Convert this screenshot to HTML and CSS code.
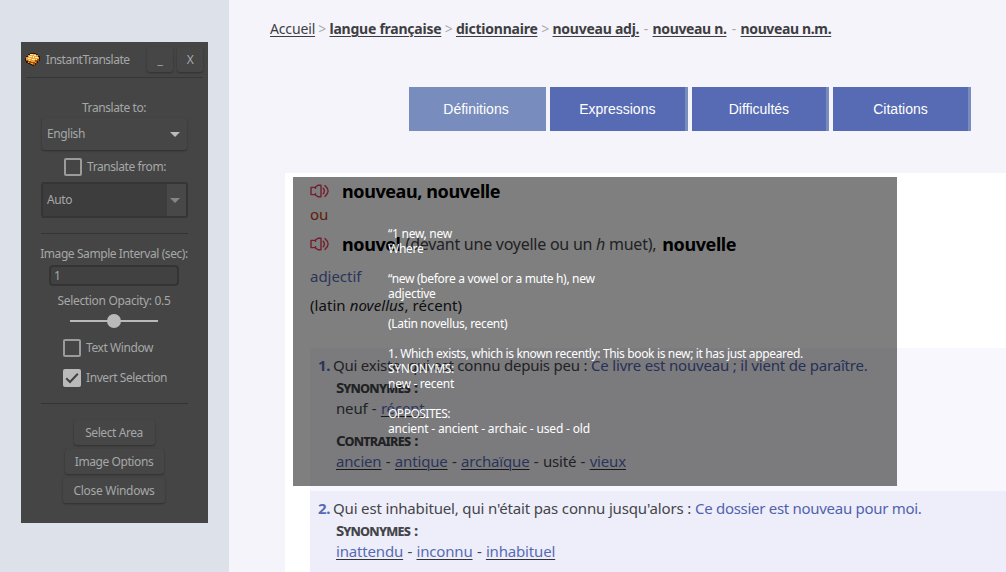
FILE: index.html
```html
<!DOCTYPE html>
<html lang="fr">
<head>
<meta charset="utf-8">
<title>nouveau, nouvelle</title>
<link rel="stylesheet" href="styles.css">
</head>
<body>
<svg width="0" height="0" class="defs">
  <symbol id="speaker" viewBox="0 0 20 14">
    <g fill="none" stroke="currentColor" stroke-width="1.4" stroke-linejoin="round">
      <path d="M5 3.4H1v7.2h4M5 3.4 8 1.2h3v11.6H8L5 10.6M5.5 3v2M5.5 9v2"/>
      <path d="M13.2 4.2q2.4 2.8 0 5.6M15 1.6q6.2 5.4 0 10.8" stroke-linecap="round"/>
    </g>
  </symbol>
</svg>
<div class="screen">
  <aside class="desk">
    <section class="panel">
      <header class="titlebar">
        <svg class="logo" width="16" height="16" viewBox="0 0 16 16" shape-rendering="crispEdges">
          <path fill="#2a1704" d="M5 1h6v1h2v2h2v5h-2v2h-2v2H9v1H7v-1H5v-1H3v-1H1V9H0V6h1V4h2V2h2z"/>
          <path fill="#a65208" d="M1 6h13v3h-2v2h-2v2H7v-1H5v-1H3V9H1z"/>
          <path fill="#eda03a" d="M5 2h6v1h2v2h1v2h-2v1h-2v2H6V9H3V8H1V5h2V3h2z"/>
          <path fill="#fff0b8" d="M5 2h3v1H5zM9 3h2v1H9zM4 4h3v1H4zM8 4h1v2H8zM10 5h3v1h-3zM3 6h3v1H3zM7 7h3v1H7zM11 7h1v1h-1zM4 8h1v1H4z"/>
          <path fill="#f6a62e" d="M3 10h1v1H3zM6 11h2v1H6zM10 10h1v1h-1z"/>
        </svg>
        <span class="app-name">InstantTranslate</span>
        <button class="btn win">_</button>
        <button class="btn win x">X</button>
      </header>
      <label class="row to">Translate to:</label>
      <div class="combo raised"><span>English</span><i class="arrow"></i></div>
      <div class="row check from"><i class="box"></i><span>Translate from:</span></div>
      <div class="combo sunken"><span>Auto</span><b class="drop"><i class="arrow"></i></b></div>
      <hr class="rule">
      <label class="row interval">Image Sample Interval (sec):</label>
      <div class="field">1</div>
      <label class="row opacity">Selection Opacity: 0.5</label>
      <div class="slider"><i class="knob"></i></div>
      <div class="row check opt"><i class="box"></i><span>Text Window</span></div>
      <div class="row check opt">
        <svg class="ticked" width="18" height="18" viewBox="0 0 18 18"><rect width="18" height="18" rx="2" fill="#bababa"/><path d="M3.2 9.3 7 13l7.8-8.2" fill="none" stroke="#414141" stroke-width="2"/></svg>
        <span>Invert Selection</span>
      </div>
      <hr class="rule last">
      <div class="actions">
        <button class="btn area">Select Area</button>
        <button class="btn image">Image Options</button>
        <button class="btn close">Close Windows</button>
      </div>
    </section>
  </aside>

  <main class="page">
    <nav class="crumbs"><a class="home">Accueil</a><i>&gt;</i><a class="langue">langue française</a><i>&gt;</i><a class="dico">dictionnaire</a><i>&gt;</i><a class="adj">nouveau adj.</a><i>-</i><a class="n">nouveau n.</a><i>-</i><a class="nm">nouveau n.m.</a></nav>
    <div class="tabs">
      <a class="tab active">Définitions</a><a class="tab">Expressions</a><a class="tab">Difficultés</a><a class="tab">Citations</a>
    </div>
    <article class="entry">
      <div class="head h1"><svg class="snd" width="20" height="14"><use href="#speaker"/></svg><strong>nouveau, nouvelle</strong></div>
      <div class="ou">ou</div>
      <div class="head h2"><svg class="snd" width="20" height="14"><use href="#speaker"/></svg><strong>nouvel</strong><span class="note">(devant une voyelle ou un <em>h</em> muet),</span><strong>nouvelle</strong></div>
      <div class="pos">adjectif</div>
      <div class="etym">(latin <em>novellus</em>, récent)</div>

      <section class="sense first">
        <p class="def"><b>1.</b><span class="d1">Qui existe, qui est connu depuis peu :</span><q class="e1">Ce livre est nouveau ; il vient de paraître.</q></p>
        <h4>Synonymes :</h4>
        <p class="words"><span>neuf</span><s>-</s><a>récent</a></p>
        <h4 class="contra">Contraires :</h4>
        <p class="words"><a>ancien</a><s>-</s><a>antique</a><s>-</s><a>archaïque</a><s>-</s><span>usité</span><s>-</s><a>vieux</a></p>
      </section>
      <section class="sense second">
        <p class="def"><b>2.</b><span class="d2">Qui est inhabituel, qui n'était pas connu jusqu'alors :</span><q class="e2">Ce dossier est nouveau pour moi.</q></p>
        <h4>Synonymes :</h4>
        <p class="words"><a>inattendu</a><s>-</s><a>inconnu</a><s>-</s><a>inhabituel</a></p>
      </section>
    </article>
  </main>

  <div class="overlay">
    <p>“1 new, new</p>
    <p>Where</p>
    <p></p>
    <p class="mute">“new (before a vowel or a mute h), new</p>
    <p>adjective</p>
    <p></p>
    <p class="latin">(Latin novellus, recent)</p>
    <p></p>
    <p class="long">1. Which exists, which is known recently: This book is new; it has just appeared.</p>
    <p>SYNONYMS:</p>
    <p>new - recent</p>
    <p></p>
    <p class="opp">OPPOSITES:</p>
    <p class="old">ancient - ancient - archaic - used - old</p>
  </div>
</div>
</body>
</html>
```

FILE: styles.css
```css
* { box-sizing: border-box; }
body { margin: 0; font-family: "Noto Sans", sans-serif; }
p, h4, hr { margin: 0; }
i { font-style: normal; }
.defs { position: absolute; }
.screen { position: relative; display: grid; grid-template-columns: 229px 1fr; width: 1006px; height: 572px; overflow: hidden; }

/* Translator window */
.desk { background: #dde1ea; padding: 42px 21px 0; }
.panel { width: 187px; height: 481px; background: #454545; color: #a5a8a8; font-size: 12px; line-height: 18px; letter-spacing: -.42px; display: flex; flex-direction: column; align-items: center; white-space: nowrap; padding-right: 1px; }
.titlebar { display: flex; align-items: center; width: 177px; height: 36px; border-bottom: 1px solid #373737; margin-left: 1px; }
.logo { margin: 0 5px 0 -1px; }
.app-name { width: 102px; letter-spacing: -.5px; }
.btn { border: 0; border-radius: 3px; padding: 0; background: #464646; color: inherit; font: inherit; letter-spacing: inherit; box-shadow: 0 1px 2px #303030; }
.win { width: 26px; height: 25px; flex: none; }
.x { margin-left: 4px; }
.to { margin-top: 21px; }
.combo { display: flex; align-items: center; justify-content: space-between; }
.raised { width: 145px; height: 32px; margin: 1px 0 1px 1px; padding: 0 7px 0 5px; border-radius: 3px; background: #464646; box-shadow: 0 1px 2px #2f2f2f; }
.arrow { border: 5px solid transparent; border-top-color: #bcbcbc; border-bottom: 0; }
.check { display: flex; align-items: center; height: 18px; gap: 5px; }
.box { width: 18px; height: 18px; border: 2px solid #9b9b9b; border-radius: 2px; }
.ticked { flex: none; }
.from { margin: 7px 0 0 2px; }
.sunken { width: 147px; height: 36px; margin: 6px 0 0 1px; padding-left: 4px; border: 2px solid #353535; border-radius: 3px; background: #3d3d3d; }
.drop { display: flex; align-items: center; justify-content: center; width: 19px; height: 32px; padding-right: 3px; background: #484848; }
.drop .arrow { border-top-color: #858585; }
.rule { width: 147px; height: 1px; border: 0; background: #343434; margin: 15px 0 0 1px; flex: none; }
.interval { margin-top: 11px; }
.field { width: 130px; height: 21px; margin: 2px 0 0; padding: 0 3px; border: 2px solid #343434; border-radius: 4px; background: #414141; line-height: 17px; }
.opacity { margin-top: 6px; letter-spacing: -.33px; }
.slider { display: flex; align-items: center; justify-content: center; width: 88px; height: 14px; margin: 4px 0 11px; background: linear-gradient(#b9b9b9, #b9b9b9) center / 100% 2px no-repeat; }
.knob { width: 14px; height: 14px; border-radius: 50%; background: #bababa; }
.opt { width: 103px; margin: 0 0 12px 1px; }
.last { margin-top: 4px; }
.actions { display: flex; flex-direction: column; align-items: center; gap: 4px; margin: 16px 0 0; }
.actions .btn { height: 25px; }
.area { width: 81px; }
.actions .image { width: 99px; }
.actions .close { width: 102px; letter-spacing: -.3px; }

/* Dictionary page */
.page { background: #f5f4fa; white-space: nowrap; color: #434549; min-width: 0; }
.crumbs { display: flex; padding: 18px 0 0 41px; font-size: 14px; line-height: 22px; color: #aaa; letter-spacing: -.24px; }
.crumbs a { color: #3e3e42; font-weight: 700; text-decoration: underline; text-underline-offset: 2px; text-decoration-thickness: 1px; flex: none; }
.crumbs .home { font-weight: 400; width: 45px; letter-spacing: -.15px; }
.crumbs .langue { width: 112px; }
.crumbs .dico { width: 82px; }
.crumbs .adj { width: 87px; letter-spacing: -.25px; }
.crumbs .n { width: 75px; letter-spacing: -.35px; }
.crumbs .nm { letter-spacing: -.36px; }
.crumbs i { width: 14.5px; text-align: center; flex: none; font-size: 14px; }
.crumbs .adj ~ i { width: 13px; }
.tabs { display: flex; gap: 4px; padding: 47px 0 0 180px; }
.tab { width: 137px; height: 44px; background: #566bb3; color: #fff; font: 14px/44px "Liberation Sans", sans-serif; text-align: center; }
.tab + .tab { width: 137.6px; border-right: 3px solid #788dbd; }
.tab.active { background: #788dbd; padding-right: 3px; }
.entry { margin: 42px 0 0 56px; padding: 6px 0 0 25px; height: 399px; background: #fff; font-size: 15px; }
.head { display: flex; align-items: center; font-size: 18px; letter-spacing: -.41px; }
.head strong { color: #000; }
.h1 { height: 24px; }
.h2 { height: 36px; }
.snd { color: #e4415c; margin-right: 12px; flex: none; }
.note { font-size: 16px; letter-spacing: -.25px; margin: 0 6px 0 5px; }
.ou { color: #c03813; line-height: 23px; }
.pos { color: #566bb3; line-height: 28px; letter-spacing: -.03px; }
.etym { color: #222; line-height: 31px; letter-spacing: .06px; }
.sense { padding: 7px 0 0 8px; line-height: 21px; }
.first { height: 143px; margin-top: 27px; background: #f7f7fd; }
.second { height: 81px; background: #eeeefa; }
.def { display: flex; }
.def b { color: #566bb3; width: 15px; letter-spacing: -.4px; }
.def q { color: #5062ad; quotes: none; }
.d1 { width: 258px; letter-spacing: -.23px; }
.d2 { width: 362px; letter-spacing: -.16px; }
.e1 { letter-spacing: -.19px; }
.e2 { letter-spacing: -.29px; }
h4 { margin-left: 18px; font-size: 15px; line-height: 22px; font-variant: small-caps; letter-spacing: -.8px; word-spacing: 1px; }
.contra { margin-top: 11px; line-height: 21px; }
.words { margin-left: 18px; display: flex; letter-spacing: -.17px; }
.words s { text-decoration: none; width: 13.4px; text-align: center; }
.words a { color: #566bb3; text-decoration: underline #333 1px; text-underline-offset: 2px; }

/* Selection overlay sits above the page */
.overlay { position: absolute; left: 293px; top: 177px; width: 604px; height: 309px; padding: 49px 0 0 95px; background: rgba(0, 0, 0, .5); color: #fff; font-size: 12px; line-height: 16px; letter-spacing: -.27px; white-space: nowrap; }
.overlay p { height: 15px; }
.overlay .mute { letter-spacing: -.31px; }
.overlay .latin { letter-spacing: -.32px; }
.overlay .long { letter-spacing: -.35px; }
.overlay .opp { letter-spacing: -.5px; }
.overlay .old { letter-spacing: -.17px; }
```
